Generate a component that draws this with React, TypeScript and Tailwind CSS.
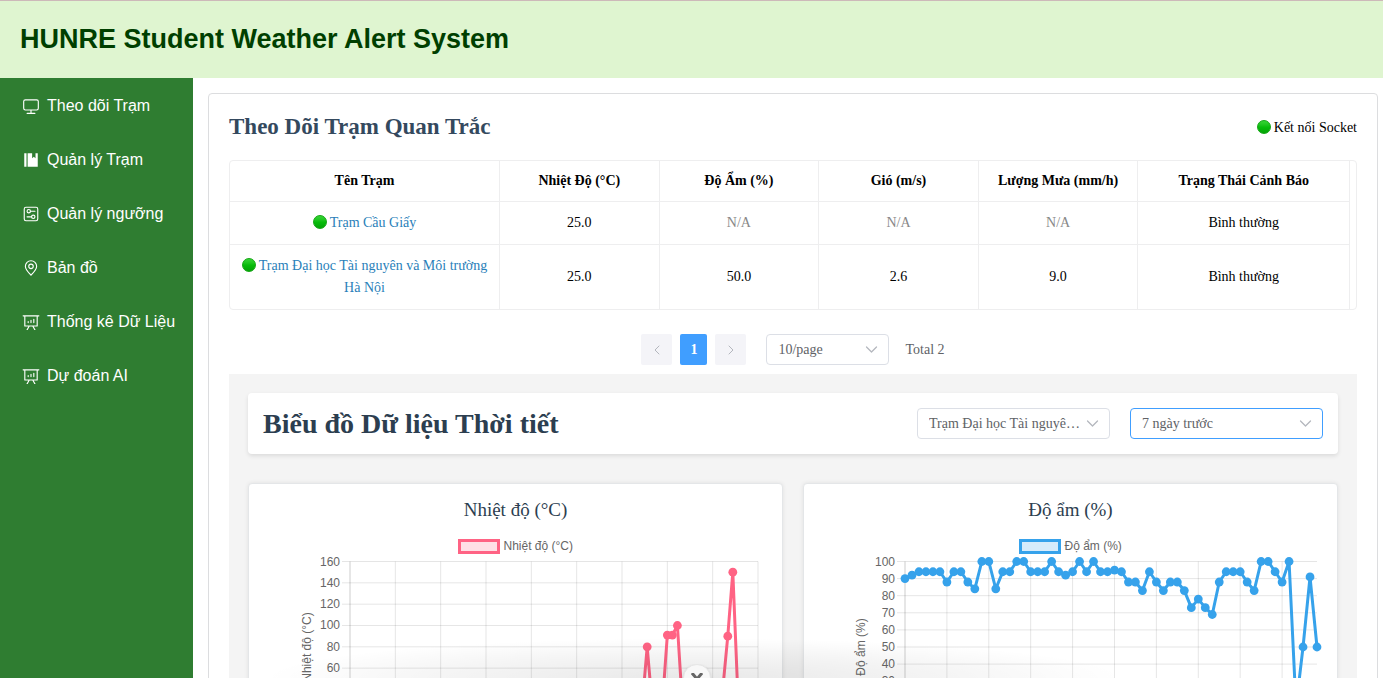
import { useId } from "react";
import type { ReactNode } from "react";

type MenuItem = { label: string; paths: string[] };

const dataAnalysis =
  "m665.216 768 110.848 192h-73.856L591.36 768H433.024L322.176 960H248.32l110.848-192H160a32 32 0 0 1-32-32V192H64a32 32 0 0 1 0-64h896a32 32 0 1 1 0 64h-64v544a32 32 0 0 1-32 32H665.216zM832 192H192v512h640V192zM352 448a32 32 0 0 1 32 32v64a32 32 0 0 1-64 0v-64a32 32 0 0 1 32-32zm160-64a32 32 0 0 1 32 32v128a32 32 0 0 1-64 0V416a32 32 0 0 1 32-32zm160-64a32 32 0 0 1 32 32v192a32 32 0 1 1-64 0V352a32 32 0 0 1 32-32z";

const menu: MenuItem[] = [
  {
    label: "Theo dõi Trạm",
    paths: [
      "M544 768v128h192a32 32 0 1 1 0 64H288a32 32 0 1 1 0-64h192V768H192A128 128 0 0 1 64 640V256a128 128 0 0 1 128-128h640a128 128 0 0 1 128 128v384a128 128 0 0 1-128 128H544zM192 192a64 64 0 0 0-64 64v384a64 64 0 0 0 64 64h640a64 64 0 0 0 64-64V256a64 64 0 0 0-64-64H192z",
    ],
  },
  {
    label: "Quản lý Trạm",
    paths: ["M576 128v288l96-96 96 96V128h128v768H320V128h256zm-448 0h128v768H128V128z"],
  },
  {
    label: "Quản lý ngưỡng",
    paths: [
      "M224 160a64 64 0 0 0-64 64v576a64 64 0 0 0 64 64h576a64 64 0 0 0 64-64V224a64 64 0 0 0-64-64H224zm0-64h576a128 128 0 0 1 128 128v576a128 128 0 0 1-128 128H224A128 128 0 0 1 96 800V224A128 128 0 0 1 224 96z",
      "M384 416a64 64 0 1 0 0-128 64 64 0 0 0 0 128zm0 64a128 128 0 1 1 0-256 128 128 0 0 1 0 256z",
      "M480 320h256q32 0 32 32t-32 32H480q-32 0-32-32t32-32zm160 416a64 64 0 1 0 0-128 64 64 0 0 0 0 128zm0 64a128 128 0 1 1 0-256 128 128 0 0 1 0 256z",
      "M288 640h256q32 0 32 32t-32 32H288q-32 0-32-32t32-32z",
    ],
  },
  {
    label: "Bản đồ",
    paths: [
      "M800 416a288 288 0 1 0-576 0c0 118.144 94.528 272.128 288 456.576C705.472 688.128 800 534.144 800 416zM512 960C277.312 746.688 160 565.312 160 416a352 352 0 0 1 704 0c0 149.312-117.312 330.688-352 544z",
      "M512 512a96 96 0 1 0 0-192 96 96 0 0 0 0 192zm0 64a160 160 0 1 1 0-320 160 160 0 0 1 0 320z",
    ],
  },
  { label: "Thống kê Dữ Liệu", paths: [dataAnalysis] },
  { label: "Dự đoán AI", paths: [dataAnalysis] },
];

const columns = [
  { title: "Tên Trạm", width: "w-[270px]" },
  { title: "Nhiệt Độ (°C)", width: "w-[14.25%]" },
  { title: "Độ Ẩm (%)", width: "w-[14.25%]" },
  { title: "Gió (m/s)", width: "w-[14.25%]" },
  { title: "Lượng Mưa (mm/h)", width: "w-[14.25%]" },
  { title: "Trạng Thái Cảnh Báo", width: "w-auto" },
];

const stations = [
  { name: "Trạm Cầu Giấy", values: ["25.0", null, null, null], status: "Bình thường" },
  {
    name: "Trạm Đại học Tài nguyên và Môi trường Hà Nội",
    values: ["25.0", "50.0", "2.6", "9.0"],
    status: "Bình thường",
  },
];

const temperature = Array.from({ length: 82 }, () => 25);
Object.assign(temperature, { 59: 80, 63: 91, 64: 91, 65: 100, 74: 40, 75: 90, 76: 150, 77: 35 });

const humidity = [
  90, 92, 94, 94, 94, 94, 88, 94, 94, 88, 84, 100, 100, 84, 94, 94, 100, 100, 94, 94, 94, 100, 94, 92, 94, 100, 94,
  100, 94, 94, 95, 94, 88, 88, 83, 94, 88, 83, 88, 88, 83, 73, 78, 73, 69, 88, 94, 94, 94, 88, 83, 100, 100, 94, 88,
  100, 15, 50, 91, 50,
];

function StatusDot() {
  return (
    <span className="mr-[3px] inline-block size-[14px] rounded-full border border-[#12a512] bg-linear-to-b from-[#35d535] via-[#07bd0b] to-[#04a307] align-[-2px]" />
  );
}

function Chevron({ className, d }: { className: string; d: string }) {
  return (
    <svg viewBox="0 0 12 12" className={className} fill="none" stroke="currentColor" aria-hidden="true">
      <path d={d} strokeLinecap="round" strokeLinejoin="round" />
    </svg>
  );
}

function SelectBox({
  label,
  options,
  width,
  active = false,
}: {
  label: string;
  options: string[];
  width: string;
  active?: boolean;
}) {
  return (
    <div className={`relative ${width}`}>
      <select
        aria-label={label}
        className={`h-[31px] w-full appearance-none overflow-hidden rounded border bg-white pr-6 pl-[11px] text-sm text-ellipsis whitespace-nowrap text-[#606266] outline-none ${
          active ? "border-[#409eff]" : "border-[#dcdfe6]"
        }`}
      >
        {options.map((option) => (
          <option key={option}>{option}</option>
        ))}
      </select>
      <Chevron className="pointer-events-none absolute top-2 right-[10px] size-[15px] text-[#b4b7be]" d="M2 4l4 4 4-4" />
    </div>
  );
}

type ChartProps = {
  label: string;
  values: number[];
  max: number;
  step: number;
  left: number;
  right: number;
  stepHeight: number;
  every: number;
  legendX: number;
  titleX: number;
  titleY: number;
  stroke: string;
  fill: string;
};

function LineChart(props: ChartProps) {
  const { label, values, max, step, left, right, stepHeight, every, legendX, titleX, titleY, stroke, fill } = props;
  const clip = useId();
  const top = 27.5;
  const ticks = Array.from({ length: max / step + 1 }, (_, i) => max - i * step);
  const bottom = top + (ticks.length - 1) * stepHeight;
  const dx = (right - left) / (values.length - 1);
  const points = values.map((value, i) => [left + i * dx, top + ((max - value) / step) * stepHeight]);
  const columnsX = values.map((_, i) => i).filter((i) => i % every === 0);

  return (
    <svg
      viewBox="0 0 493 247"
      role="img"
      aria-label={label}
      className="block w-full overflow-visible font-['Liberation_Sans',Arial,sans-serif] text-[12px]"
    >
      <defs>
        <clipPath id={clip}>
          <rect x={left - 6} y={top - 6} width={right - left + 12} height={bottom - top + 12} />
        </clipPath>
      </defs>
      <rect x={legendX} y="6.5" width="39" height="12" fill={fill} stroke={stroke} strokeWidth="3" />
      <text x={legendX + 44} y="16" fill="#666">
        {label}
      </text>
      {ticks.map((tick, i) => (
        <g key={tick}>
          <line x1={left - 8} x2={right} y1={top + i * stepHeight} y2={top + i * stepHeight} stroke="#000" strokeOpacity="0.1" />
          <text x={left - 10} y={top + 4 + i * stepHeight} textAnchor="end" fill="#666">
            {tick}
          </text>
        </g>
      ))}
      {columnsX.map((i) => (
        <line
          key={i}
          x1={left + i * dx}
          x2={left + i * dx}
          y1={top}
          y2={bottom}
          stroke="#000"
          strokeOpacity={i === 0 ? 0.2 : 0.1}
        />
      ))}
      <text transform={`translate(${titleX} ${titleY}) rotate(-90)`} textAnchor="middle" fill="#666">
        {label}
      </text>
      <g clipPath={`url(#${clip})`}>
        <polyline points={points.map((p) => p.join(",")).join(" ")} fill="none" stroke={stroke} strokeWidth="3" strokeLinejoin="round" />
        {points.map(([x, y], i) => (
          <circle key={i} cx={x} cy={y} r="4.4" fill={stroke} />
        ))}
      </g>
    </svg>
  );
}

function ChartCard({ title, children }: { title: string; children: ReactNode }) {
  return (
    <section className="rounded border border-[#e4e6e8] bg-white px-5 pt-[13px] pb-5 shadow-[0_0_4px_rgba(0,0,0,0.08)]">
      <h3 className="mb-[11px] text-center text-[19px] leading-[26px] text-[#2c3e50]">{title}</h3>
      {children}
    </section>
  );
}

export default function App() {
  return (
    <div className="relative flex h-screen flex-col overflow-hidden bg-white pr-1 pb-[3px] font-['Liberation_Serif','Times_New_Roman',serif] text-sm text-black">
      <header className="flex h-[78px] shrink-0 items-center border-t border-[#cdb9b9] bg-[#dff5d0] px-5">
        <h1 className="font-['Liberation_Sans',Arial,sans-serif] text-[27px] font-bold text-[#003f00]">
          HUNRE Student Weather Alert System
        </h1>
      </header>
      <div className="flex min-h-0 flex-1">
        <nav className="w-[193px] shrink-0 bg-[#2f7d31] pt-px font-['Liberation_Sans',Arial,sans-serif] text-base text-white">
          {menu.map((item) => (
            <a key={item.label} href="#" className="flex h-[54px] items-center gap-[7px] pl-[22px] whitespace-nowrap">
              <svg viewBox="0 0 1024 1024" fill="currentColor" className="size-[18px] shrink-0" aria-hidden="true">
                {item.paths.map((d) => (
                  <path key={d} d={d} />
                ))}
              </svg>
              {item.label}
            </a>
          ))}
        </nav>
        <main className="min-w-0 flex-1 overflow-y-auto pt-[15px] pr-[5px] pl-[15px] [scrollbar-width:none]">
          <div className="rounded border border-[#dcdddf] px-5 pt-[15px] pb-5">
            <div className="mb-[14px] flex h-[37px] items-center justify-between">
              <h2 className="text-[23px] font-bold text-[#34495e]">Theo Dõi Trạm Quan Trắc</h2>
              <p>
                <StatusDot />
                Kết nối Socket
              </p>
            </div>
            <div className="rounded border border-[#eeeeef] pr-[6px]">
              <table className="w-full table-fixed border-separate border-spacing-0 text-center">
                <thead>
                  <tr>
                    {columns.map((column) => (
                      <th key={column.title} className={`h-[41px] border-r border-b border-[#eeeeef] font-bold ${column.width}`}>
                        {column.title}
                      </th>
                    ))}
                  </tr>
                </thead>
                <tbody className="leading-[22px]">
                  {stations.map((station, row) => {
                    const line = row < stations.length - 1 ? "border-b" : "";
                    return (
                      <tr key={station.name}>
                        <td className={`border-r border-[#eeeeef] px-2 py-[10px] ${line}`}>
                          <a href="#" className="text-[#2980b9]">
                            <StatusDot />
                            {station.name}
                          </a>
                        </td>
                        {station.values.map((value, i) => (
                          <td key={i} className={`border-r border-[#eeeeef] ${line} ${value === null ? "text-[#888]" : ""}`}>
                            {value ?? "N/A"}
                          </td>
                        ))}
                        <td className={`border-r border-[#eeeeef] ${line}`}>{station.status}</td>
                      </tr>
                    );
                  })}
                </tbody>
              </table>
            </div>
            <div className="flex items-center justify-center pt-6 pb-[9px] text-[#606266]">
              <button aria-label="Trang trước" className="flex h-[31px] w-[31px] items-center justify-center rounded-xs bg-[#f4f4f8] text-[#b4b7be]">
                <Chevron className="size-3" d="M8 2L4 6l4 4" />
              </button>
              <button className="mx-2 h-[31px] w-[27px] rounded-xs bg-[#409eff] font-bold text-white">1</button>
              <button aria-label="Trang sau" className="mr-5 flex h-[31px] w-[31px] items-center justify-center rounded-xs bg-[#f4f4f8] text-[#b4b7be]">
                <Chevron className="size-3" d="M4 2l4 4-4 4" />
              </button>
              <SelectBox label="Số hàng mỗi trang" options={["10/page", "20/page"]} width="w-[123px]" />
              <span className="ml-4">Total 2</span>
            </div>
            <div className="bg-[#f4f4f4] px-[19px] pt-[19px] pb-5">
              <div className="mb-[29px] flex h-[61px] items-center justify-between rounded bg-white px-[15px] shadow-[0_2px_4px_rgba(0,0,0,0.1)]">
                <h2 className="text-[28px] font-bold text-[#2c3e50]">Biểu đồ Dữ liệu Thời tiết</h2>
                <div className="flex gap-5">
                  <SelectBox
                    label="Trạm"
                    options={["Trạm Đại học Tài nguyên và Môi trường Hà Nội", "Trạm Cầu Giấy"]}
                    width="w-[193px]"
                  />
                  <SelectBox label="Khoảng thời gian" options={["7 ngày trước", "30 ngày trước"]} width="w-[193px]" active />
                </div>
              </div>
              <div className="grid grid-cols-2 gap-5">
                <ChartCard title="Nhiệt độ (°C)">
                  <LineChart
                    label="Nhiệt độ (°C)"
                    values={temperature}
                    max={160}
                    step={20}
                    left={81}
                    right={489}
                    stepHeight={21.33}
                    every={9}
                    legendX={190.5}
                    titleX={42}
                    titleY={113}
                    stroke="#ff6384"
                    fill="#ffe0e6"
                  />
                </ChartCard>
                <ChartCard title="Độ ẩm (%)">
                  <LineChart
                    label="Độ ẩm (%)"
                    values={humidity}
                    max={100}
                    step={10}
                    left={81}
                    right={493}
                    stepHeight={17.1}
                    every={6}
                    legendX={196.5}
                    titleX={41}
                    titleY={113}
                    stroke="#36a2eb"
                    fill="#d7ecfb"
                  />
                </ChartCard>
              </div>
            </div>
          </div>
        </main>
      </div>
      <div className="pointer-events-none absolute inset-x-0 bottom-[3px] h-10 overflow-hidden">
        <div className="mx-auto h-20 w-[860px] bg-[radial-gradient(closest-side,rgba(0,0,0,0.09),rgba(0,0,0,0.04)_60%,transparent)]" />
      </div>
      <div className="pointer-events-none absolute inset-x-0 bottom-[3px] flex h-[14px] justify-center overflow-hidden pl-[6px]">
        <button aria-label="Đóng" className="flex size-7 shrink-0 justify-center rounded-full border border-[#e6e6e6] bg-[#f8f8f8] pt-2 shadow-sm">
          <svg viewBox="0 0 12 12" className="size-3" stroke="#666" strokeWidth="3" aria-hidden="true">
            <path d="M1 0l10 12M11 0L1 12" />
          </svg>
        </button>
      </div>
    </div>
  );
}
